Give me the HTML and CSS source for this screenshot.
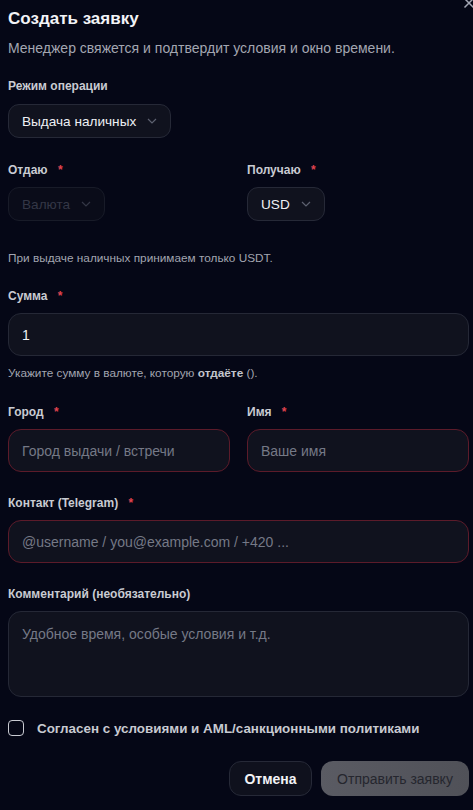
FILE: index.html
```html
<!DOCTYPE html>
<html lang="ru">
<head>
<meta charset="utf-8">
<link rel="stylesheet" href="styles.css">
</head>
<body>
<div class="modal">
  <button class="close" aria-label="Закрыть">
    <svg width="12" height="12" viewBox="0 0 12 12"><path d="M1.5 1.5L10.5 10.5M10.5 1.5L1.5 10.5" stroke="#a3a6b4" stroke-width="1.5" fill="none"/></svg>
  </button>
  <h1 class="title">Создать заявку</h1>
  <p class="subtitle">Менеджер свяжется и подтвердит условия и окно времени.</p>

  <div class="field f-mode">
    <div class="label">Режим операции</div>
    <div class="select">Выдача наличных <span class="chev"><svg width="10" height="6" viewBox="0 0 10 6"><path d="M1 1l4 4 4-4" stroke="#5d6170" stroke-width="1.2" fill="none"/></svg></span></div>
  </div>

  <div class="row f-cur">
    <div class="field">
      <div class="label">Отдаю <span class="req">*</span></div>
      <div class="select disabled">Валюта <span class="chev"><svg width="10" height="6" viewBox="0 0 10 6"><path d="M1 1l4 4 4-4" stroke="#343746" stroke-width="1.2" fill="none"/></svg></span></div>
    </div>
    <div class="field">
      <div class="label">Получаю <span class="req">*</span></div>
      <div class="select">USD <span class="chev"><svg width="10" height="6" viewBox="0 0 10 6"><path d="M1 1l4 4 4-4" stroke="#5d6170" stroke-width="1.2" fill="none"/></svg></span></div>
    </div>
  </div>

  <p class="note f-note">При выдаче наличных принимаем только USDT.</p>

  <div class="field f-sum">
    <div class="label">Сумма <span class="req">*</span></div>
    <div class="input value">1</div>
    <p class="note hint">Укажите сумму в валюте, которую <b>отдаёте</b> ().</p>
  </div>

  <div class="row f-city">
    <div class="field">
      <div class="label">Город <span class="req">*</span></div>
      <div class="input invalid">Город выдачи / встречи</div>
    </div>
    <div class="field">
      <div class="label">Имя <span class="req">*</span></div>
      <div class="input invalid">Ваше имя</div>
    </div>
  </div>

  <div class="field f-contact">
    <div class="label">Контакт (Telegram) <span class="req">*</span></div>
    <div class="input invalid">@username / you@example.com / +420 ...</div>
  </div>

  <div class="field f-comment">
    <div class="label">Комментарий (необязательно)</div>
    <div class="input textarea">Удобное время, особые условия и т.д.</div>
  </div>

  <label class="check">
    <span class="box"></span>
    <span>Согласен с условиями и AML/санкционными политиками</span>
  </label>

  <div class="actions">
    <button class="btn cancel">Отмена</button>
    <button class="btn submit">Отправить заявку</button>
  </div>
</div>
</body>
</html>
```

FILE: styles.css
```css
* { box-sizing: border-box; }
html, body {
  margin: 0;
  background: #050716;
  font-family: "Liberation Sans", Arial, sans-serif;
  color: #e8e9ee;
}
.modal {
  position: relative;
  width: 473px;
  height: 810px;
  padding: 7px 4px 0 8px;
  overflow: hidden;
}
.close {
  position: absolute;
  top: -3px;
  right: -2px;
  background: none;
  border: 0;
  padding: 0;
  line-height: 0;
}
.title {
  margin: 0;
  font-size: 17px;
  line-height: 24px;
  font-weight: 700;
  color: #f2f3f6;
}
.subtitle {
  margin: 7px 0 0;
  font-size: 14px;
  line-height: 20px;
  color: #a3a6b1;
}
.label {
  font-size: 12px;
  line-height: 16px;
  font-weight: 700;
  color: #c9cbd2;
  margin-bottom: 9px;
}
.f-mode .label { margin-bottom: 10px; }
.req {
  color: #e0434f;
  margin-left: 7px;
  font-weight: 600;
}
.f-mode { margin-top: 20px; }
.f-cur { margin-top: 24px; }
.note.f-note { margin-top: 29px; }
.f-sum { margin-top: 22px; }
.f-city { margin-top: 23px; }
.f-contact { margin-top: 23px; }
.f-comment { margin-top: 23px; }
.row {
  display: grid;
  grid-template-columns: 222px 222px;
  column-gap: 17px;
}
.select {
  display: inline-flex;
  align-items: center;
  height: 34px;
  padding: 0 13px 0 13px;
  border-radius: 11px;
  background: #10121e;
  border: 1px solid #262937;
  font-size: 13.6px;
  color: #eef0f4;
  gap: 11px;
}
.select.disabled {
  background: #0a0c19;
  border-color: #181b28;
  color: #343746;
}
.chev { display: inline-flex; align-items: center; }
.note {
  margin: 0;
  font-size: 11.8px;
  line-height: 16px;
  color: #a2a5b0;
}
.note b { font-weight: 700; color: #c2c4cc; }
.note.hint { margin-top: 9px; }
.input {
  display: flex;
  align-items: center;
  height: 43px;
  padding: 0 13px;
  border-radius: 13px;
  background: #10121e;
  border: 1px solid #252836;
  font-size: 14px;
  color: #757986;
}
.input.value { color: #f2f3f6; }
.input.invalid { border-color: #5c1b2a; }
.textarea {
  height: 86px;
  align-items: flex-start;
  padding-top: 14px;
}
.check {
  display: flex;
  align-items: center;
  gap: 13px;
  margin-top: 23px;
  font-size: 13.4px;
  font-weight: 700;
  color: #c8cad1;
}
.box {
  width: 16px;
  height: 16px;
  border: 1.5px solid #c9cbd2;
  border-radius: 4px;
}
.actions {
  display: flex;
  justify-content: flex-end;
  gap: 9px;
  margin-top: 25px;
}
.btn {
  height: 35px;
  border-radius: 12px;
  font-family: inherit;
  font-size: 14px;
  padding: 0;
  white-space: nowrap;
}
.cancel {
  width: 83px;
  background: #0f111d;
  border: 1px solid #262937;
  color: #f2f3f6;
  font-weight: 700;
}
.submit {
  width: 148px;
  background: linear-gradient(90deg, #5a5b63, #505158);
  border: 0;
  color: #25262e;
  font-weight: 400;
}
```
